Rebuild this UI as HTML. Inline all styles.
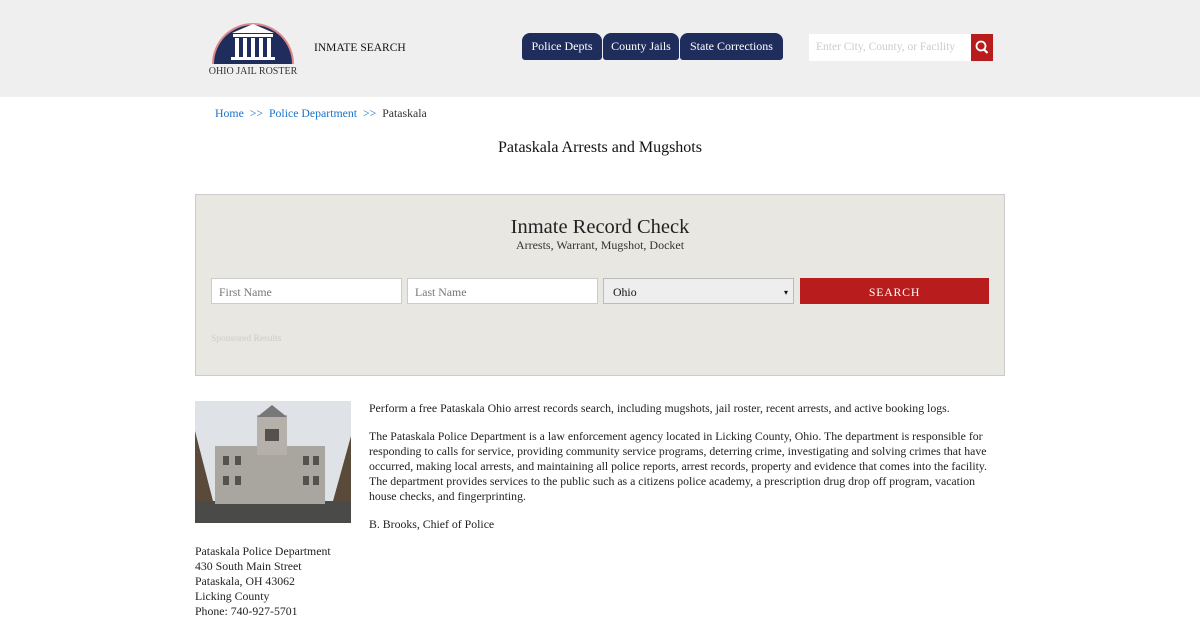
<!DOCTYPE html>
<html><head><meta charset="utf-8"><style>
*{margin:0;padding:0;box-sizing:border-box}
body{width:1200px;height:620px;overflow:hidden;background:#fff;font-family:"Liberation Serif","DejaVu Serif",serif;color:#222;font-size:11.8px}
.hdr{height:97px;background:#efefef;position:relative}
.abs{position:absolute;white-space:nowrap}
.tab{position:absolute;top:33px;height:27px;background:#1f2d5c;color:#fff;border-radius:8px 8px 3px 3px;font-size:12px;line-height:27px;text-align:center}
a{color:#1a73c8;text-decoration:none}
</style></head><body>
<div class="hdr">
 <svg class="abs" style="left:206px;top:18px" width="94" height="60" viewBox="0 0 94 60">
  <path d="M6 46 A41 41 0 0 1 88 46 Z" fill="#d88" />
  <path d="M8 46 A39 39 0 0 1 86 46 Z" fill="#1f2d5c"/>
  <polygon points="26,15 47,6 68,15" fill="#fff"/>
  <rect x="27" y="16" width="40" height="3" fill="#fff"/>
  <rect x="29" y="20" width="4" height="19" fill="#fff"/><rect x="37" y="20" width="4" height="19" fill="#fff"/><rect x="45" y="20" width="4" height="19" fill="#fff"/><rect x="53" y="20" width="4" height="19" fill="#fff"/><rect x="61" y="20" width="4" height="19" fill="#fff"/>
  <rect x="25" y="39" width="44" height="3" fill="#fff"/>
  <text x="47" y="56" text-anchor="middle" font-family="Liberation Serif,serif" font-size="10" fill="#333">OHIO JAIL ROSTER</text>
 </svg>
 <div class="abs" style="left:314px;top:42px;font-size:11.5px;color:#111">INMATE SEARCH</div>
 <div class="tab" style="left:522px;width:80px">Police Depts</div>
 <div class="tab" style="left:603px;width:76px">County Jails</div>
 <div class="tab" style="left:680px;width:103px">State Corrections</div>
 <div class="abs" style="left:809px;top:34px;width:162px;height:27px;background:#fff;color:#ccc;font-size:11.5px;line-height:27px;padding-left:7px;overflow:hidden">Enter City, County, or Facility</div>
 <div class="abs" style="left:971px;top:34px;width:22px;height:27px;background:#b81c1c">
  <svg width="22" height="27" viewBox="0 0 22 27"><circle cx="10" cy="12" r="4.5" fill="none" stroke="#fff" stroke-width="1.8"/><line x1="13" y1="15.5" x2="16.5" y2="19" stroke="#fff" stroke-width="2.2"/></svg>
 </div>
</div>
<div class="abs" style="left:215px;top:106px"><a>Home</a> &nbsp;<a>&gt;&gt;</a>&nbsp; <a>Police Department</a> &nbsp;<a>&gt;&gt;</a>&nbsp; <span style="color:#333">Pataskala</span></div>
<div class="abs" style="left:0;width:1200px;top:139px;text-align:center;font-size:16px;color:#111">Pataskala Arrests and Mugshots</div>
<div class="abs" style="left:195px;top:194px;width:810px;height:182px;background:#e8e7e2;border:1px solid #ccc">
 <div style="text-align:center;margin-top:21px;font-size:20.5px;color:#222">Inmate Record Check</div>
 <div style="text-align:center;font-size:12px;color:#333;margin-top:-1px">Arrests, Warrant, Mugshot, Docket</div>
 <div class="abs" style="left:15px;top:83px;width:191px;height:26px;background:#fff;border:1px solid #ccc;color:#777;line-height:26px;padding-left:7px">First Name</div>
 <div class="abs" style="left:211px;top:83px;width:191px;height:26px;background:#fff;border:1px solid #ccc;color:#777;line-height:26px;padding-left:7px">Last Name</div>
 <div class="abs" style="left:407px;top:83px;width:191px;height:26px;background:#eee;border:1px solid #bbb;color:#111;line-height:27px;padding-left:9px">Ohio<span style="position:absolute;right:5px;font-size:8px">&#9662;</span></div>
 <div class="abs" style="left:604px;top:83px;width:189px;height:26px;background:#b81c1c;color:#fff;line-height:28px;text-align:center;letter-spacing:.8px">SEARCH</div>
 <div class="abs" style="left:15px;top:139px;font-size:9.5px;color:#ccc">Sponsored Results</div>
</div>
<svg class="abs" style="left:195px;top:401px" width="156" height="122" viewBox="0 0 156 122">
 <rect width="156" height="122" fill="#dfe3e8"/>
 <rect y="100" width="156" height="22" fill="#4a4a48"/>
 <rect x="20" y="45" width="110" height="58" fill="#a9a6a0"/>
 <rect x="62" y="14" width="30" height="40" fill="#b5b1aa"/>
 <polygon points="62,16 77,4 92,16" fill="#777"/>
 <g fill="#55524e"><rect x="28" y="55" width="6" height="9"/><rect x="40" y="55" width="6" height="9"/><rect x="108" y="55" width="6" height="9"/><rect x="118" y="55" width="6" height="9"/><rect x="28" y="75" width="6" height="9"/><rect x="40" y="75" width="6" height="9"/><rect x="108" y="75" width="6" height="9"/><rect x="118" y="75" width="6" height="9"/><rect x="70" y="28" width="14" height="12"/></g>
 <path d="M0 30 L18 100 L0 100Z M156 35 L138 100 L156 100Z" fill="#5a4a3a"/>
</svg>
<div class="abs" style="left:195px;top:544px;line-height:15px">Pataskala Police Department<br>430 South Main Street<br>Pataskala, OH 43062<br>Licking County<br>Phone: 740-927-5701</div>
<div style="position:absolute;left:369px;top:401px;width:630px;line-height:15px">
 <p style="margin-bottom:13px">Perform a free Pataskala Ohio arrest records search, including mugshots, jail roster, recent arrests, and active booking logs.</p>
 <p style="margin-bottom:13px">The Pataskala Police Department is a law enforcement agency located in Licking County, Ohio. The department is responsible for responding to calls for service, providing community service programs, deterring crime, investigating and solving crimes that have occurred, making local arrests, and maintaining all police reports, arrest records, property and evidence that comes into the facility. The department provides services to the public such as a citizens police academy, a prescription drug drop off program, vacation house checks, and fingerprinting.</p>
 <p>B. Brooks, Chief of Police</p>
</div>
</body></html>
